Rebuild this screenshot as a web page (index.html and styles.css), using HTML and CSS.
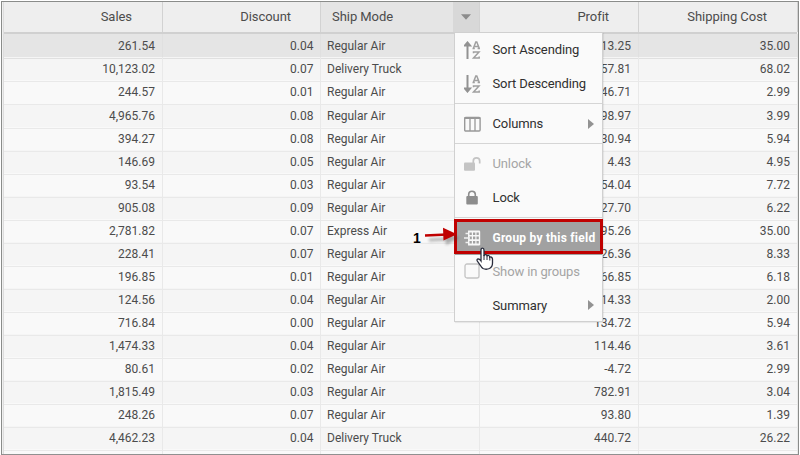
FILE: index.html
```
<!DOCTYPE html>
<html lang="en">
<head>
<meta charset="utf-8">
<title>Orders</title>
<link rel="stylesheet" href="styles.css">
</head>
<body>
<main class="frame">
  <div class="grid">
    <div class="row head">
      <div class="cell">Sales</div>
      <div class="cell">Discount</div>
      <div class="cell mode">Ship Mode<span class="trigger"><svg width="10" height="6" viewBox="0 0 10 6"><path d="M0 0.3h10l-5 5.4z" fill="#8c8c8c"/></svg></span></div>
      <div class="cell">Profit</div>
      <div class="cell">Shipping Cost</div>
    </div>
    <div id="rows"></div>
  </div>
</main>
<nav class="menu">
  <div class="item"><svg class="icon" viewBox="0 0 18 18"><path d="M3.500 18V3M1 4.500l2.500-3 2.500 3z" fill="#929292" stroke="#929292" stroke-width="2"/><path d="M9.300 7.500l2.500-6.500h1l2.500 6.500M10.500 5.500h3.600M8.500 7.500h2.300M13.600 7.500h2.400M9.500 12.300v-1.400h5.500L9.500 16.900h5.700v-1.500" fill="none" stroke="#a0a0a0" stroke-width="1.500"/></svg>Sort Ascending</div>
  <div class="item"><svg class="icon" viewBox="0 0 18 18"><path d="M3.500 0v15M1 13.500l2.500 3 2.500-3z" fill="#929292" stroke="#929292" stroke-width="2"/><path d="M9.300 7.500l2.500-6.500h1l2.500 6.500M10.500 5.500h3.600M8.500 7.500h2.300M13.600 7.500h2.400M9.500 12.300v-1.400h5.500L9.500 16.900h5.700v-1.500" fill="none" stroke="#a0a0a0" stroke-width="1.500"/></svg>Sort Descending</div>
  <hr>
  <div class="item"><svg class="icon" viewBox="0 0 18 18"><rect x=".7" y="2.500" width="15.400" height="13.500" rx="1" fill="none" stroke="#999" stroke-width="1.400"/><path d="M6 3v13M11 3v13" stroke="#999" stroke-width="1.300"/><path d="M.5 3h15.800" stroke="#999" stroke-width="2"/></svg>Columns<i class="more"></i></div>
  <hr>
  <div class="item off"><svg class="icon" viewBox="0 0 18 18"><rect x="0" y="7.500" width="11" height="8.200" rx="1" fill="#c4c4c4"/><path d="M9.300 8V6a3.200 3.200 0 0 1 6.400 0v2.500" fill="none" stroke="#c4c4c4" stroke-width="1.700"/></svg>Unlock</div>
  <div class="item"><svg class="icon" viewBox="0 0 18 18"><rect x="2.300" y="7" width="11.500" height="8.500" rx="1" fill="#8d8d8d"/><path d="M4.700 8V5.500a3.300 3.300 0 0 1 6.600 0V8" fill="none" stroke="#8d8d8d" stroke-width="1.600"/></svg>Lock</div>
  <hr>
  <div class="item hot"><svg class="icon" viewBox="0 0 18 18"><path d="M4 1.500h11a1.200 1.200 0 0 1 1.200 1.200v12.600a1.200 1.200 0 0 1-1.200 1.200H4z" fill="#f7f7f7"/><path d="M5.500 3.500h2.300v2.500H5.500zM9 3.500h2.300v2.500H9zM12.500 3.500h2.300v2.500h-2.300zM5.500 7.500h2.300v2.800H5.500zM9 7.500h2.300v2.800H9zM12.500 7.500h2.300v2.800h-2.300zM5.500 11.900h2.300v2.700H5.500zM9 11.900h2.300v2.700H9zM12.500 11.900h2.300v2.700h-2.300z" fill="#a1a1a1"/><path d="M0 9h6M1.500 4.500H4M1.500 13.500H4" stroke="#f0f0f0" stroke-width="1.500"/></svg>Group by this field</div>
  <div class="item off"><svg class="icon" viewBox="0 0 18 18"><rect x="1" y="2" width="14" height="14" rx="2" fill="#fafafa" stroke="#c4c4c4" stroke-width="1.300"/></svg>Show in groups</div>
  <div class="item"><span class="icon"></span>Summary<i class="more"></i></div>
</nav>
<div class="callout"></div>
<div class="step">1</div>
<svg class="arrow" width="40" height="24" viewBox="0 0 40 24">
  <g filter="url(#soft)" opacity=".4"><path d="M5 14l20-1" stroke="#444" stroke-width="3"/><path d="M21 6l14 6-13 7z" fill="#333"/></g>
  <path d="M1 9.500l22-1" stroke="#c00000" stroke-width="2.500"/><path d="M19 1.800l14 6.400-13.500 6.400z" fill="#c00000"/>
  <filter id="soft"><feGaussianBlur stdDeviation="1.500"/></filter>
</svg>
<svg class="hand" width="18" height="24" viewBox="0 0 18 24"><path d="M5 14V3.200Q5 1.200 6.500 1.200T8 3.200V9Q8.400 7.500 9.700 7.700T11 9.300Q11.600 8 12.700 8.500T13.800 10.200Q15 9.500 15.800 10.500T16.500 12.500V16Q16.500 20 13.500 21.500Q10 23 7 21.500Q5.500 20.500 4.300 18.300L1.300 14Q.5 12 2.200 11.800Q3.500 11.800 5 14z" fill="#fff" stroke="#292c3c" stroke-width="1.300"/><path d="M8 8v5M11 9v4M13.800 10v3.500" stroke="#292c3c"/></svg>
<script src="rows.js"></script>
</body>
</html>
```
FILE: styles.css
```
* { box-sizing: border-box; }
body { margin: 0; width: 800px; height: 455px; overflow: hidden; background: #fff; font: 12px Roboto, "Liberation Sans", sans-serif; color: #4c4c4c; }
.frame { width: 798px; height: 454px; margin: 1px 0 0 1px; padding: 0 1px; border: 1px solid #8a8c8a; border-bottom-color: #909090; overflow: hidden; background: #f0f0f0; }
.grid { border-left: 1px solid #ddd; }
.row { display: grid; grid-template-columns: 159px 158px 159px 159px 159px; height: 23.070px; }
.row:nth-child(odd) { background: #f9f9f9; }
.row:nth-child(even) { background: #f5f5f5; }
#rows .row:first-child { background: #e5e5e5; height: 23.400px; }
#rows .cell { line-height: 24px; }
.cell { border-right: 1px solid #e9e9e9; border-bottom: 1px solid #e9e9e9; text-align: right; padding-right: 7px; white-space: nowrap; }
#rows .row:first-child .cell { border-color: #e0e0e0; }
#rows .cell:nth-child(2) { padding-right: 6.500px; }
.cell.mode { text-align: left; padding-left: 6px; }
.row.head { height: 32px; background: #eee; border-bottom: 2px solid #d0d0d0; font-size: 13px; letter-spacing: -.05px; }
.head .cell { line-height: 29px; padding-right: 30px; border-color: #d2d2d2; border-bottom: 0; }
.head .cell:nth-child(2), .head .cell:nth-child(4) { padding-right: 29px; }
.head .mode { display: flex; justify-content: space-between; padding: 0 0 0 11px; background: #e5e5e5; }
.trigger { width: 26px; display: flex; align-items: center; justify-content: center; background: #d8d8d8; }
.menu { position: absolute; left: 454px; top: 32px; width: 149px; height: 290px; border: 1px solid #d0d0d0; background: #fafafa; color: #303030; font-size: 13px; letter-spacing: -.12px; box-shadow: 1px 1px 1px #0001; }
.item { display: flex; align-items: center; height: 33.700px; padding: 0 8px 0 9px; white-space: nowrap; }
.icon { width: 18px; height: 18px; margin-right: 10.500px; flex: none; }
.menu hr { height: 1px; border: 0; margin: 2.500px 0 3px; background: #d5d5d5; }
.more { margin-left: auto; border-left: 6px solid #929292; border-top: 5px solid transparent; border-bottom: 5px solid transparent; }
.off { color: #a5a5a5; }
.hot { background: #a1a1a1; color: #fff; font-weight: 700; font-size: 12px; letter-spacing: .24px; }
.callout { position: absolute; left: 454px; top: 219px; width: 149px; height: 35px; border: 3px solid #c00000; }
.step { position: absolute; left: 413px; top: 229px; font: bold 14px/18px "Liberation Sans", sans-serif; color: #000; }
.arrow { position: absolute; left: 424px; top: 226px; }
.hand { position: absolute; left: 476px; top: 247px; }
```
FILE: rows.js
```
const data = `261.54|0.04|Regular Air|-213.25|35.00
10,123.02|0.07|Delivery Truck|457.81|68.02
244.57|0.01|Regular Air|46.71|2.99
4,965.76|0.08|Regular Air|1,198.97|3.99
394.27|0.08|Regular Air|30.94|5.94
146.69|0.05|Regular Air|4.43|4.95
93.54|0.03|Regular Air|-54.04|7.72
905.08|0.09|Regular Air|127.70|6.22
2,781.82|0.07|Express Air|-695.26|35.00
228.41|0.07|Regular Air|-226.36|8.33
196.85|0.01|Regular Air|-166.85|6.18
124.56|0.04|Regular Air|-14.33|2.00
716.84|0.00|Regular Air|134.72|5.94
1,474.33|0.04|Regular Air|114.46|3.61
80.61|0.02|Regular Air|-4.72|2.99
1,815.49|0.03|Regular Air|782.91|3.04
248.26|0.07|Regular Air|93.80|1.39
4,462.23|0.04|Delivery Truck|440.72|26.22
||||`;
document.getElementById("rows").innerHTML = data.split("\n").map(line =>
  `<div class="row">${line.split("|").map((v, i) => `<div class="cell${i === 2 ? " mode" : ""}">${v}</div>`).join("")}</div>`
).join("");
```
